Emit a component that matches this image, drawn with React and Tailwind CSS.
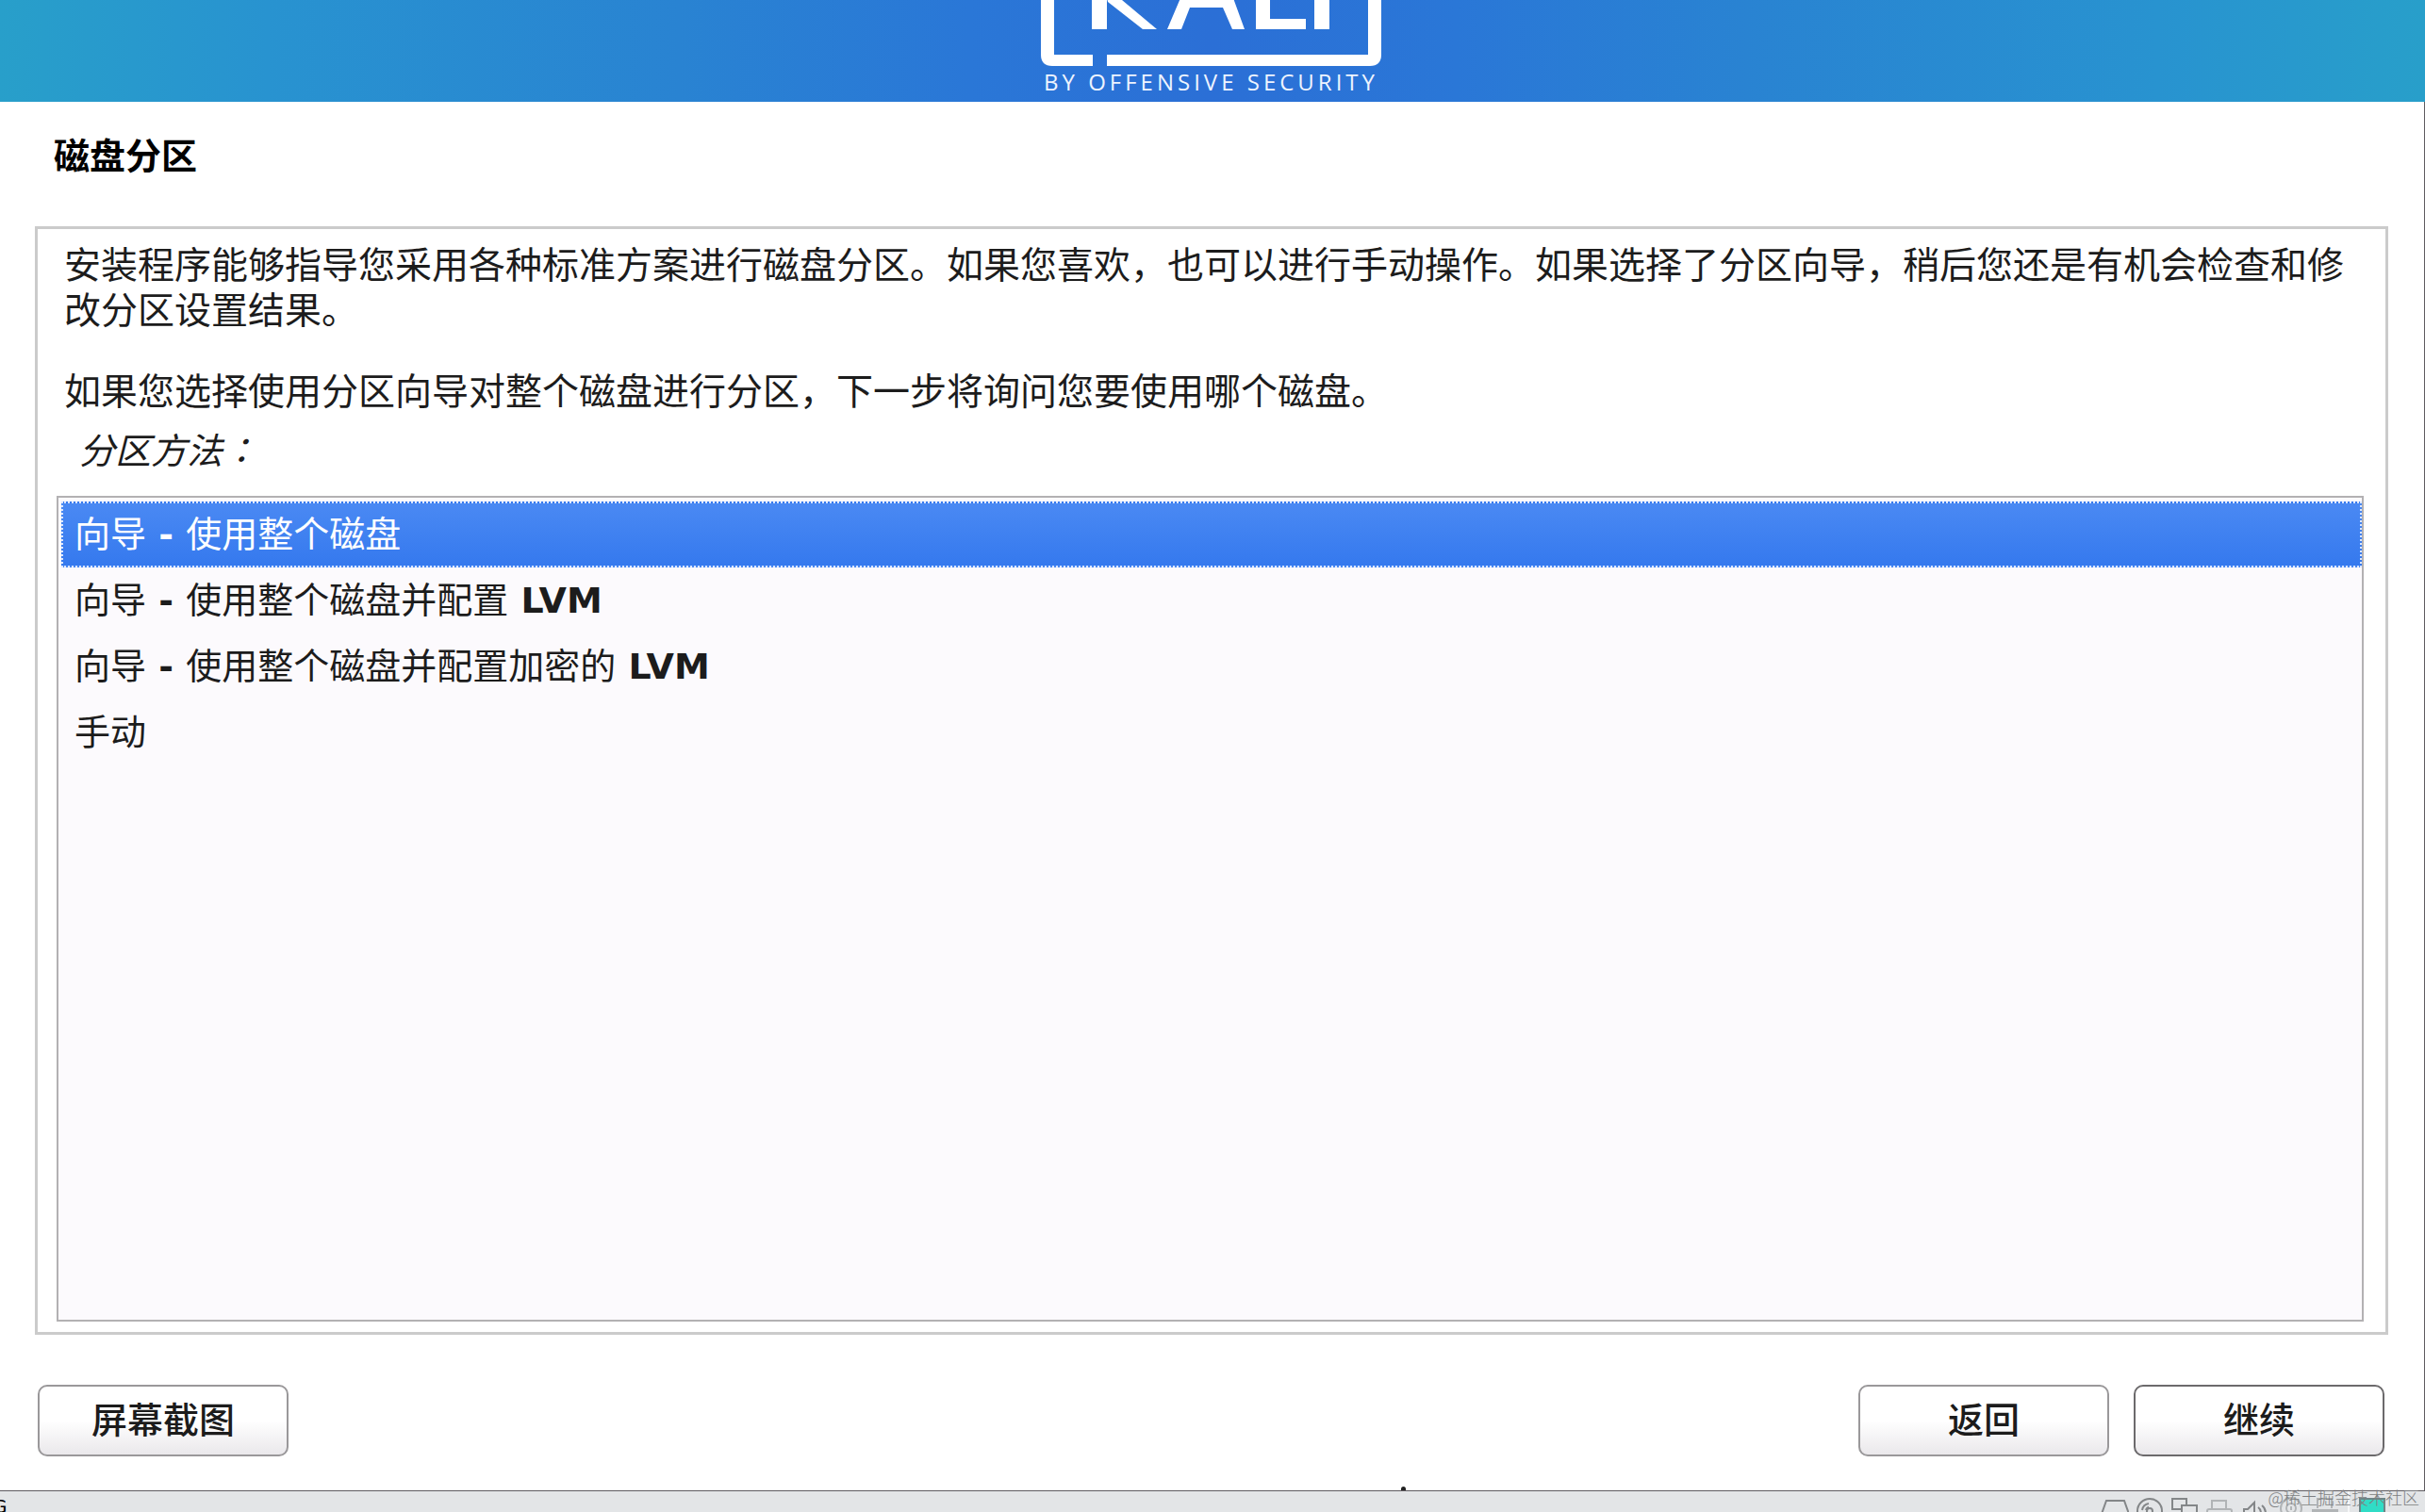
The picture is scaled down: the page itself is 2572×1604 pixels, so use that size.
import React, { useState } from "react";

const CJK = "font-['DejaVu_Sans','Noto_Sans_CJK_SC',sans-serif]";

const options = [
  [["向导", 0], [" - ", 1], ["使用整个磁盘", 0]],
  [["向导", 0], [" - ", 1], ["使用整个磁盘并配置", 0], [" LVM", 1]],
  [["向导", 0], [" - ", 1], ["使用整个磁盘并配置加密的", 0], [" LVM", 1]],
  [["手动", 0]],
];

function KaliLogo() {
  return (
    <svg viewBox="0 0 361 70" className="block h-[70px] w-[361px]" fill="#fff" aria-label="KALI" role="img">
      <path d="M0 -4H14V58H55V70H12Q0 70 0 58Z" />
      <path d="M70 58H347V-4H361V58Q361 70 349 70H70Z" />
      <path d="M54 -10H70V31H54Z" />
      <path d="M70 -2L86 0L123 31H108L71 2Z" />
      <path d="M134 31L148 -2H204L216 31H203L193 8H158L149 31Z" />
      <path d="M228 -10H243V20H281V31H228Z" />
      <path d="M290 -10H306V31H290Z" />
    </svg>
  );
}

function Banner() {
  return (
    <header className="flex h-[108px] shrink-0 flex-col items-center bg-linear-[90deg,#289fca_0%,#2893d0_11%,#2983d2_28%,#2a77d7_40%,#2b6fd6_50%,#2a77d7_60%,#2983d2_72%,#2893d0_89%,#289fca_100%] pr-[3px]">
      <KaliLogo />
      <p className="font-['Open_Sans',sans-serif] text-[24px] leading-[34px] font-medium tracking-[4px] text-[#eef4ff]">BY OFFENSIVE SECURITY</p>
    </header>
  );
}

function Option({ parts, index, selected, onSelect }) {
  return (
    <label
      className={
        "flex h-[70px] cursor-default items-center border-2 border-dotted pl-3 whitespace-pre " +
        (selected
          ? "border-[#dbe7ff] bg-linear-to-b from-[#4a89f3] to-[#3579ee] text-white"
          : "border-transparent")
      }
    >
      <input type="radio" name="method" value={index} checked={selected} onChange={onSelect} className="sr-only" />
      <span>
        {parts.map(([text, latin], i) => (
          <span key={i} className={latin ? "font-bold" : ""}>{text}</span>
        ))}
      </span>
    </label>
  );
}

function DialogButton({ children, primary }) {
  return (
    <button
      type="button"
      className={
        "h-[76px] w-[266px] rounded-[10px] border-2 bg-linear-to-b from-white from-50% to-[#eae8eb] text-[38px] leading-[48px] font-medium " +
        (primary ? "border-[#6c6a6c]" : "border-[#9a989a]")
      }
    >
      {children}
    </button>
  );
}

function StatusIcon({ faded, children }) {
  return (
    <svg
      viewBox="0 0 30 22"
      className={"h-[22px] w-[30px] " + (faded ? "text-[#b1b4b6]" : "text-[#838688]")}
      fill="none"
      stroke="currentColor"
      strokeWidth="2"
      aria-hidden="true"
    >
      {children}
    </svg>
  );
}

function StatusBar() {
  return (
    <footer className="flex h-[22px] shrink-0 overflow-hidden bg-[#e3e5e7]">
      <span className="-ml-2 text-[20px] leading-[32px] text-black">G</span>
      <div className="flex grow justify-end gap-[7px]">
        <StatusIcon><path d="M1 24L6 10H25L30 24" /></StatusIcon>
        <StatusIcon>
          <circle cx="15" cy="21" r="13" />
          <circle cx="15" cy="21" r="3" />
          <path d="M7 20Q8 14 14 13M11 20Q12 17 14 17" />
        </StatusIcon>
        <StatusIcon>
          <path d="M12 19H2V8H17V14" />
          <path d="M12 24V15H28V24" />
        </StatusIcon>
        <StatusIcon faded>
          <path d="M7 18V10H22V18" />
          <path d="M2 24V21Q2 19 4 19H26Q28 19 28 21V24" />
        </StatusIcon>
        <StatusIcon>
          <path d="M4 24V19H8L15 12V24" />
          <path d="M19 17Q22 19 22 24M23 15Q27 18 27 24" />
        </StatusIcon>
        <StatusIcon faded>
          <circle cx="17" cy="18" r="11" />
          <circle cx="17" cy="18" r="5" />
          <path d="M17 16V20" />
        </StatusIcon>
        <StatusIcon faded>
          <path d="M8 18V8H23V18" />
          <path d="M3 24V20H29V24Z" fill="currentColor" />
        </StatusIcon>
      </div>
      <span className="ml-[10px] w-[2px] bg-[#f5f6f7]" />
      <span className="mt-[7px] mr-[42px] ml-[10px] w-7 border-2 border-b-0 border-[#6d8587] bg-[#30dcc6]" />
    </footer>
  );
}

export default function App() {
  const [selected, setSelected] = useState(0);
  return (
    <div className={"relative flex h-screen flex-col overflow-hidden bg-white text-[#1c1c1c] " + CJK}>
      <Banner />
      <main className="flex min-h-0 grow flex-col border-r border-b border-[#5f5b60] pr-[38px] pb-9 pl-[37px]">
        <h1 className="pt-[34px] pl-5 text-[38px] leading-[48px] font-bold text-black">磁盘分区</h1>
        <section className="mt-[50px] flex min-h-0 grow flex-col border-3 border-[#cbcbcb] pt-[15px] pr-[23px] pb-[11px] pl-[20px]">
          <div className="pl-2 text-[39px] leading-[48px]">
            <p>安装程序能够指导您采用各种标准方案进行磁盘分区。如果您喜欢，也可以进行手动操作。如果选择了分区向导，稍后您还是有机会检查和修改分区设置结果。</p>
            <p className="mt-[38px]">如果您选择使用分区向导对整个磁盘进行分区，下一步将询问您要使用哪个磁盘。</p>
          </div>
          <fieldset className="mt-3 flex min-h-0 grow flex-col text-[38px] leading-[48px]">
            <legend className="mb-[23px] pl-6 italic">分区方法<span className="font-['Noto_Sans_CJK_JP',sans-serif]">：</span></legend>
            <div className="grow border-2 border-[#b3b1b3] bg-[#fcfafd] pt-1 pl-[3px]">
              {options.map((parts, i) => (
                <Option key={i} index={i} parts={parts} selected={selected === i} onSelect={() => setSelected(i)} />
              ))}
            </div>
          </fieldset>
        </section>
        <div className="mt-[53px] flex gap-[26px] pr-1 pl-[3px]">
          <DialogButton>屏幕截图</DialogButton>
          <span className="grow" />
          <DialogButton>返回</DialogButton>
          <DialogButton primary>继续</DialogButton>
        </div>
      </main>
      <StatusBar />
      <span className="absolute bottom-[23px] left-[1486px] h-1 w-[5px] rounded-t-full bg-[#222]" />
      <span className="absolute right-[6px] bottom-1 font-['Noto_Sans_CJK_SC',sans-serif] text-[18px] leading-[24px] font-light text-[#7d7f82]">@稀土掘金技术社区</span>
    </div>
  );
}
